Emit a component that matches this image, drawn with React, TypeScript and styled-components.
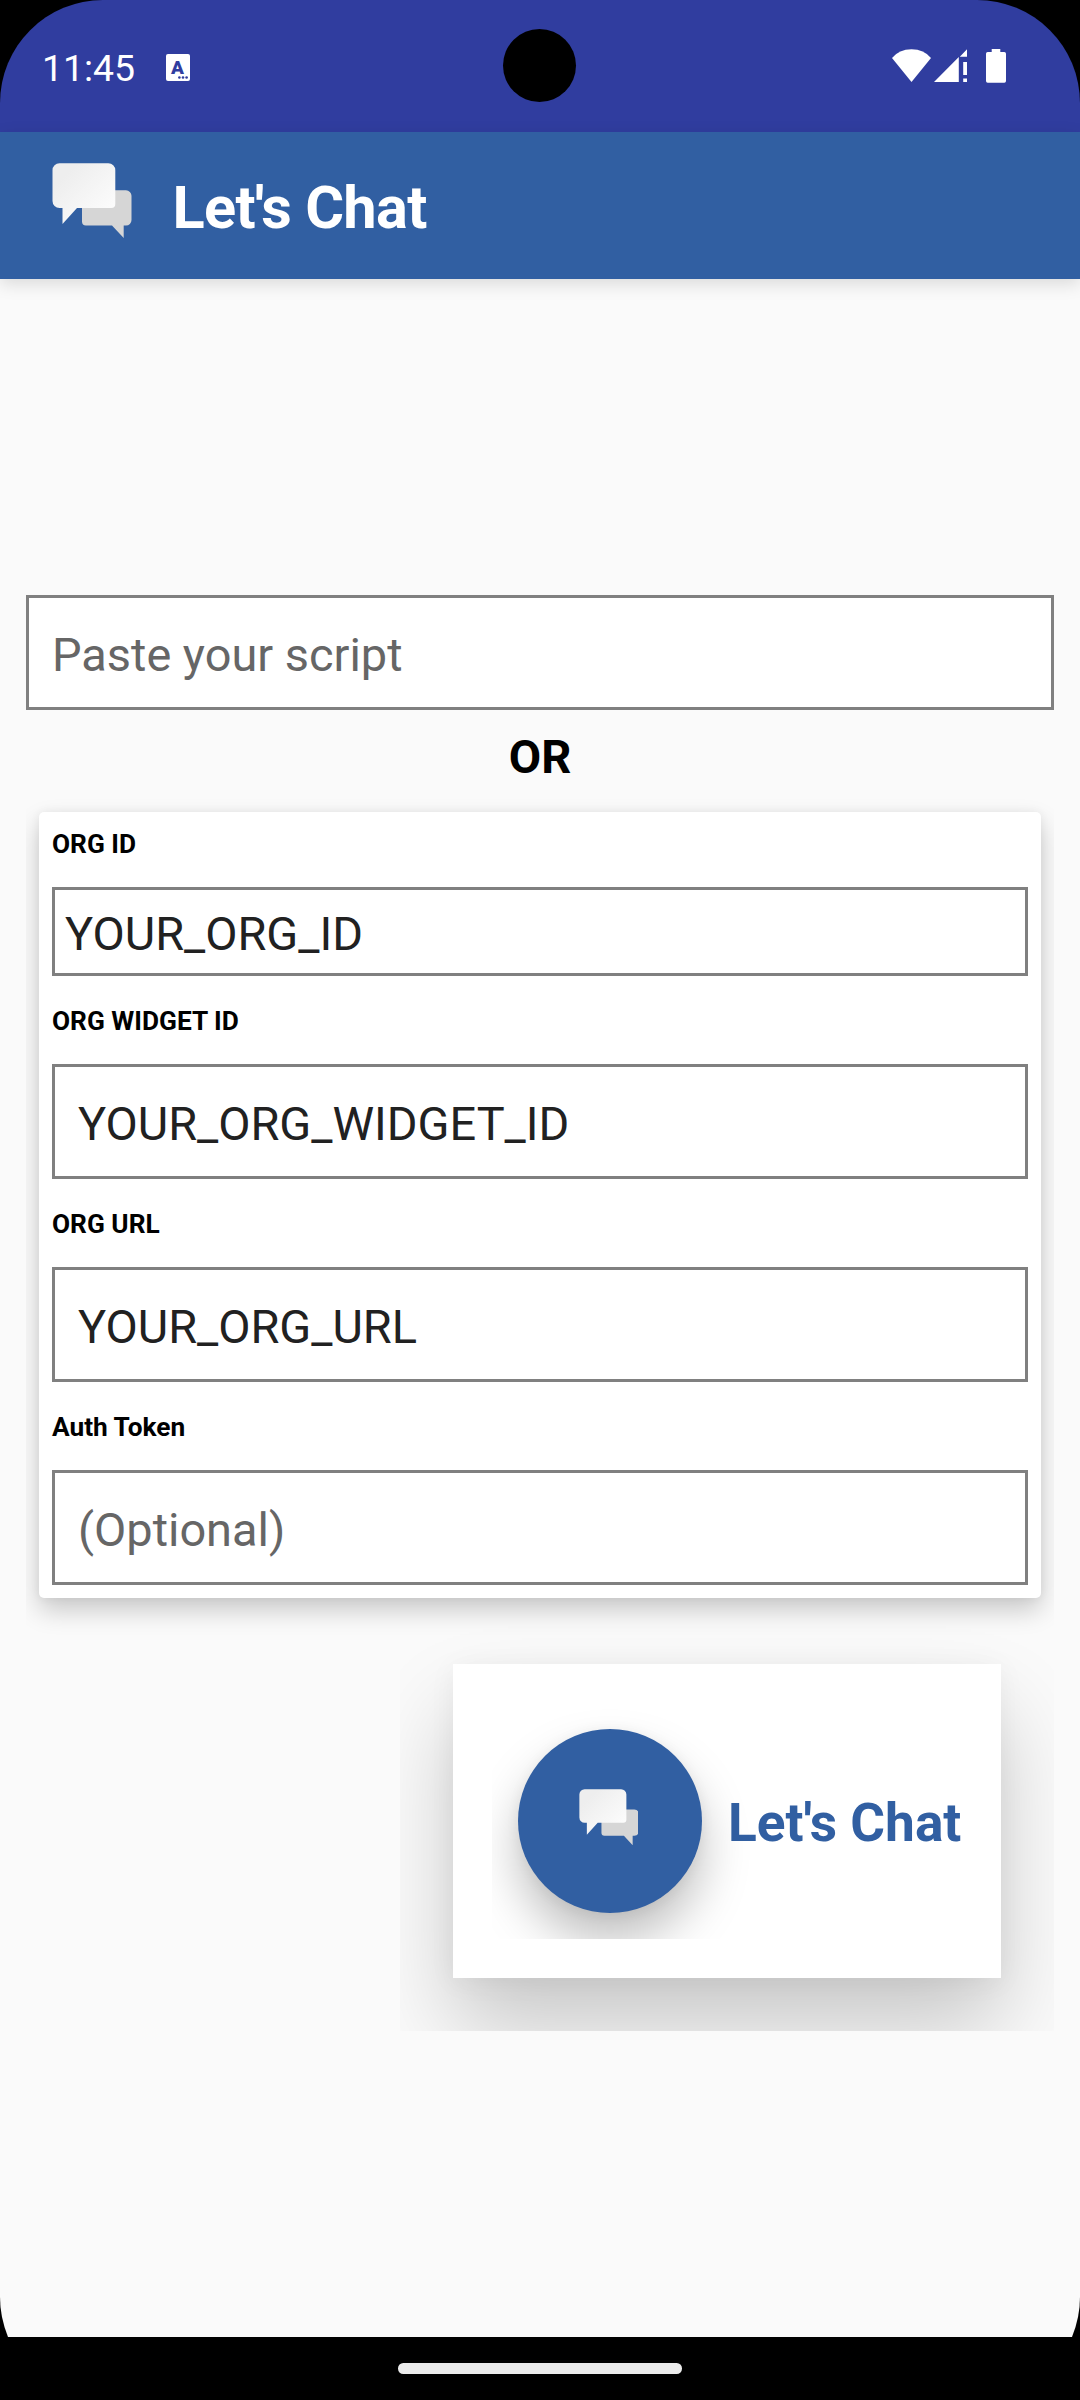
import React from "react";
import styled, { createGlobalStyle } from "styled-components";

const BRAND = "#315fa2";

const GlobalStyle = createGlobalStyle`
  *, *::before, *::after { box-sizing: border-box; }
  body { margin: 0; background: #000; font-family: Roboto, "Liberation Sans", sans-serif; }
`;

const Device = styled.div`
  width: 1080px;
  height: 2400px;
  display: flex;
  flex-direction: column;
  overflow: hidden;
  border-radius: 103px;
  background: #000;
`;

const StatusBar = styled.header`
  position: relative;
  flex: none;
  height: 132px;
  padding: 0 74px 0 42px;
  display: flex;
  align-items: center;
  background: #303d9f;
  color: #fff;
`;

const Clock = styled.span`
  width: 124px;
  padding-top: 4px;
  font-size: 37.4px;
  line-height: 44px;
`;

const KeyboardBadge = styled.span`
  position: relative;
  width: 24px;
  height: 27px;
  margin-top: 2px;
  padding-left: 5px;
  border-radius: 2px;
  background: #fff;
  color: #303d9f;
  font-size: 19px;
  font-weight: 900;
  line-height: 27px;
`;

const BadgeDots = styled.svg`
  position: absolute;
  right: 2px;
  bottom: 2px;
`;

const Camera = styled.span`
  position: absolute;
  left: 503px;
  top: 29px;
  width: 73px;
  height: 73px;
  border-radius: 50%;
  background: #000;
`;

const StatusIcons = styled.div`
  display: flex;
  margin-left: auto;
`;

const AppBar = styled.div`
  position: relative;
  flex: none;
  height: 147px;
  padding-left: 52px;
  display: flex;
  align-items: center;
  gap: 41px;
  background: ${BRAND};
  box-shadow: 0 5px 16px rgba(0, 0, 0, 0.13);
`;

const BarIcon = styled.span`
  display: flex;
  padding-bottom: 10px;
`;

const AppTitle = styled.h1`
  margin: 0;
  padding-top: 5px;
  font-size: 59.5px;
  line-height: 68px;
  font-weight: 700;
  letter-spacing: -0.7px;
  color: #fff;
`;

const Content = styled.main`
  flex: 1;
  display: flex;
  flex-direction: column;
  padding: 316px 26px 0;
  background: #fafafa;
`;

const Field = styled.div<{ $compact?: boolean; $hint?: boolean }>`
  height: ${(p) => (p.$compact ? 89 : 115)}px;
  padding: 5px ${(p) => (p.$compact ? 10 : 23)}px 0;
  display: flex;
  align-items: center;
  border: 3px solid #808080;
  background: #fff;
  color: ${(p) => (p.$hint ? "#666" : "#212121")};
  font-size: 46.9px;
  line-height: 56px;
`;

const Divider = styled.p`
  margin: 0 0 8px;
  text-align: center;
  font-size: 47px;
  line-height: 94px;
  font-weight: 700;
  color: #000;
`;

const Card = styled.section`
  margin: 0 13px;
  padding: 13px;
  display: flex;
  flex-direction: column;
  gap: 26px;
  border-radius: 5px;
  background: #fff;
  box-shadow: 0 12px 26px rgba(0, 0, 0, 0.2), 0 0 10px rgba(0, 0, 0, 0.06);
  clip-path: inset(-30px -13px -45px -13px);
`;

const FieldLabel = styled.div`
  margin-bottom: 24px;
  font-size: 26.25px;
  line-height: 38px;
  font-weight: 700;
  color: #000;
`;

const ChatCard = styled.section`
  align-self: flex-end;
  width: 548px;
  height: 314px;
  margin: 66px 53px 0 0;
  padding-left: 65px;
  display: flex;
  align-items: center;
  background: #fff;
  box-shadow: 0 50px 84px rgba(0, 0, 0, 0.2), 0 4px 26px rgba(0, 0, 0, 0.05);
  clip-path: inset(-60px -53px -53px -53px);
`;

const ChatButton = styled.div`
  width: 184px;
  height: 184px;
  padding: 0 3px 7px 0;
  display: flex;
  align-items: center;
  justify-content: center;
  border-radius: 50%;
  background: ${BRAND};
  box-shadow: 0 28px 48px rgba(0, 0, 0, 0.25), 0 2px 14px rgba(0, 0, 0, 0.06);
  clip-path: inset(-40px -60px -26px -26px);
`;

const ChatText = styled.span`
  padding: 4px 0 0 26px;
  font-size: 53.2px;
  line-height: 62px;
  font-weight: 700;
  color: ${BRAND};
`;

const NavBar = styled.footer`
  flex: none;
  height: 63px;
  padding-top: 26.3px;
  display: flex;
  justify-content: center;
  background: #000;
`;

const NavPill = styled.span`
  width: 284px;
  height: 10.5px;
  border-radius: 5.25px;
  background: #ebebeb;
`;

function ChatIcon({ width, id }: { width: number; id: string }) {
  return (
    <svg width={width} height={(width * 75) / 79.5} viewBox="12 13 79.5 75" aria-hidden="true">
      <defs>
        <linearGradient id={id} x1="0" y1="0" x2="1" y2="1">
          <stop offset="0.2" stopColor="#eeeeee" />
          <stop offset="1" stopColor="#ffffff" />
        </linearGradient>
      </defs>
      <path
        d="M42 40.3H86a5.5 5.5 0 0 1 5.5 5.5V70a5.5 5.5 0 0 1-5.5 5.5H83.7V88L72 75.5H46a4 4 0 0 1-4-4Z"
        fill="#d6d6d6"
      />
      <path
        d="M19.5 13.3H68.3a7 7 0 0 1 7 7V54a4 4 0 0 1-4 4H37L22.5 74V58H19.5a7 7 0 0 1-7-7V20.3a7 7 0 0 1 7-7Z"
        fill={`url(#${id})`}
      />
    </svg>
  );
}

function SystemIcons() {
  return (
    <svg width="114" height="34" viewBox="892 49 114 34" fill="#fff" aria-hidden="true">
      <path d="M892 58Q899 49.2 911.5 49.2T931 58L911.5 82Z" />
      <path d="M934 82 958.8 57V82ZM959.8 56.8 967 49.3V56.8Z" />
      <path d="M963.2 62H967V75H963.2ZM963.2 78.5H967V82H963.2Z" />
      <path d="M991.7 49H1000.3V52H1004.3A1.7 1.7 0 0 1 1006 53.7V81A1.7 1.7 0 0 1 1004.3 82.7H987.7A1.7 1.7 0 0 1 986 81V53.7A1.7 1.7 0 0 1 987.7 52H991.7Z" />
    </svg>
  );
}

const fields = [
  { label: "ORG ID", text: "YOUR_ORG_ID", compact: true },
  { label: "ORG WIDGET ID", text: "YOUR_ORG_WIDGET_ID" },
  { label: "ORG URL", text: "YOUR_ORG_URL" },
  { label: "Auth Token", text: "(Optional)", hint: true },
];

export default function App() {
  return (
    <>
      <GlobalStyle />
      <Device>
        <StatusBar>
          <Clock>11:45</Clock>
          <KeyboardBadge>
            A
            <BadgeDots width="10" height="3" viewBox="0 0 10 3" fill="#303d9f">
              <circle cx="1.4" cy="1.5" r="1.3" />
              <circle cx="5" cy="1.5" r="1.3" />
              <circle cx="8.6" cy="1.5" r="1.3" />
            </BadgeDots>
          </KeyboardBadge>
          <Camera />
          <StatusIcons>
            <SystemIcons />
          </StatusIcons>
        </StatusBar>
        <AppBar>
          <BarIcon>
            <ChatIcon width={79.5} id="bubble-bar" />
          </BarIcon>
          <AppTitle>Let's Chat</AppTitle>
        </AppBar>
        <Content>
          <Field $hint>Paste your script</Field>
          <Divider>OR</Divider>
          <Card>
            {fields.map((f) => (
              <div key={f.label}>
                <FieldLabel>{f.label}</FieldLabel>
                <Field $compact={f.compact} $hint={f.hint}>
                  {f.text}
                </Field>
              </div>
            ))}
          </Card>
          <ChatCard>
            <ChatButton>
              <ChatIcon width={59.5} id="bubble-button" />
            </ChatButton>
            <ChatText>Let's Chat</ChatText>
          </ChatCard>
        </Content>
        <NavBar>
          <NavPill />
        </NavBar>
      </Device>
    </>
  );
}
